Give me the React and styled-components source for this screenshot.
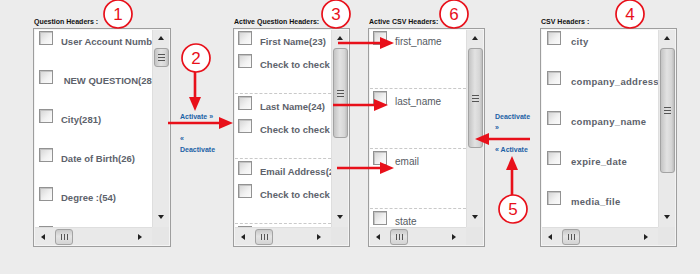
import React from "react";
import styled, { createGlobalStyle } from "styled-components";

const GlobalStyle = createGlobalStyle`
  html, body { margin: 0; padding: 0; background: #ececec; }
  body { font-family: "Liberation Sans", Arial, sans-serif; }
`;

const Page = styled.div`
  position: relative;
  width: 700px;
  height: 274px;
  box-sizing: border-box;
  padding: 17px 0 0 33px;
  display: flex;
  align-items: flex-start;
  background: #ececec;
`;

const Column = styled.div`
  display: flex;
  flex-direction: column;
  width: ${(p) => p.$w}px;
  margin-left: ${(p) => p.$ml || 0}px;
`;

const Label = styled.div`
  height: 10px;
  line-height: 10px;
  margin: 0 0 1px 1px;
  font-size: 7px;
  font-weight: bold;
  color: #111;
  white-space: nowrap;
`;

const ListBox = styled.div`
  box-sizing: border-box;
  width: ${(p) => p.$w}px;
  height: 219px;
  border: 1px solid #9e9e9e;
  padding: 1px;
  background: #f4f4f4;
  display: grid;
  grid-template-columns: 1fr 17px;
  grid-template-rows: 1fr 18px;
`;

const Content = styled.div`
  background: #fff;
  overflow: hidden;
  min-width: 0;
`;

const Row = styled.div`
  display: flex;
  align-items: flex-start;
  height: ${(p) => p.$h}px;
  padding-left: ${(p) => p.$pl}px;
  white-space: pre;
`;

const Check = styled.span`
  flex: none;
  box-sizing: border-box;
  width: 14px;
  height: 14px;
  margin-top: 1px;
  border: 1px solid #929292;
  background: linear-gradient(135deg, #d4d4d4 0%, #f2f2f2 60%, #fbfbfb 100%);
  box-shadow: inset 1px 1px 0 #c2c2c2;
`;

const ItemText = styled.span`
  margin: 6px 0 0 ${(p) => p.$gap}px;
  line-height: 12px;
  font-size: ${(p) => (p.$plain ? 10 : 9.5)}px;
  font-weight: ${(p) => (p.$plain ? "normal" : "bold")};
  color: ${(p) => (p.$plain ? "#555a62" : "#5d626b")};
  letter-spacing: ${(p) => (p.$wide ? 0.3 : 0)}px;
`;

const Group = styled.div`
  height: ${(p) => p.$h}px;
  border-bottom: 1px dashed #c9c9c9;
  margin-bottom: 1px;
`;

const VScroll = styled.div`
  display: flex;
  flex-direction: column;
  align-items: center;
  background: #e9e9e9;
  border-left: 1px solid #dedede;
`;

const ArrowBox = styled.div`
  flex: none;
  width: 16px;
  height: ${(p) => p.$h || 16}px;
  display: flex;
  align-items: center;
  justify-content: center;
`;

const Tri = styled.span`
  width: 0;
  height: 0;
  ${(p) =>
    p.$dir === "up"
      ? "border-left:3.5px solid transparent;border-right:3.5px solid transparent;border-bottom:4px solid #222;"
      : p.$dir === "down"
      ? "border-left:3.5px solid transparent;border-right:3.5px solid transparent;border-top:4px solid #222;"
      : p.$dir === "left"
      ? "border-top:3.5px solid transparent;border-bottom:3.5px solid transparent;border-right:4px solid #222;"
      : "border-top:3.5px solid transparent;border-bottom:3.5px solid transparent;border-left:4px solid #222;"}
`;

const VThumb = styled.div`
  flex: none;
  box-sizing: border-box;
  width: 15px;
  height: ${(p) => p.$h}px;
  margin-top: 2px;
  border: 1px solid #a3a3a3;
  border-radius: 3px;
  background: linear-gradient(to right, #c4c4c4 0%, #e2e2e2 45%, #d6d6d6 80%, #bdbdbd 100%);
  display: flex;
  flex-direction: column;
  align-items: center;
  justify-content: center;
  gap: 2px;
`;

const HGrip = styled.span`
  width: 7px;
  height: 1px;
  background: #555;
`;

const Spacer = styled.div`
  flex: 1;
`;

const HScroll = styled.div`
  display: flex;
  align-items: center;
  background: #e9e9e9;
  border-top: 1px solid #dedede;
`;

const HThumb = styled.div`
  flex: none;
  box-sizing: border-box;
  width: 18px;
  height: 16px;
  margin-left: 4px;
  border: 1px solid #a3a3a3;
  border-radius: 3px;
  background: linear-gradient(to bottom, #c8c8c8 0%, #e4e4e4 45%, #d4d4d4 100%);
  display: flex;
  align-items: center;
  justify-content: center;
  gap: 2px;
`;

const VGrip = styled.span`
  width: 1px;
  height: 6px;
  background: #555;
`;

const Corner = styled.div`
  background: #e6e6e6;
`;

const Controls = styled.div`
  box-sizing: border-box;
  width: ${(p) => p.$w}px;
  padding: 94px 0 0 ${(p) => p.$pl}px;
  display: flex;
  flex-direction: column;
`;

const CtrlLink = styled.a`
  display: block;
  width: 40px;
  margin-bottom: ${(p) => p.$mb || 0}px;
  font-size: 7px;
  line-height: 11px;
  font-weight: bold;
  color: #1b61a6;
  text-decoration: none;
`;

const Overlay = styled.svg`
  position: absolute;
  left: 0;
  top: 0;
  pointer-events: none;
`;

function ScrollList({ w, thumb, children }) {
  return (
    <ListBox $w={w}>
      <Content>{children}</Content>
      <VScroll>
        <ArrowBox>
          <Tri $dir="up" />
        </ArrowBox>
        <VThumb $h={thumb}>
          <HGrip />
          <HGrip />
          <HGrip />
        </VThumb>
        <Spacer />
        <ArrowBox $h={20}>
          <Tri $dir="down" />
        </ArrowBox>
      </VScroll>
      <HScroll>
        <ArrowBox>
          <Tri $dir="left" />
        </ArrowBox>
        <HThumb>
          <VGrip />
          <VGrip />
          <VGrip />
        </HThumb>
        <Spacer />
        <ArrowBox>
          <Tri $dir="right" />
        </ArrowBox>
        <ArrowBox $h={4} style={{ width: 4 }} />
      </HScroll>
      <Corner />
    </ListBox>
  );
}

function Item({ h, pl, gap, text, plain, wide }) {
  return (
    <Row $h={h} $pl={pl}>
      <Check />
      <ItemText $gap={gap} $plain={plain} $wide={wide}>
        {text}
      </ItemText>
    </Row>
  );
}

const questions = [
  "User Account Number(1)",
  " NEW QUESTION(282)",
  "City(281)",
  "Date of Birth(26)",
  "Degree :(54)",
  "Education(30)",
];

const activeQuestions = [
  ["First Name(23)", "Check to check all"],
  ["Last Name(24)", "Check to check all"],
  ["Email Address(25)", "Check to check all"],
  ["Phone(27)", "Check to check all"],
];

const activeCsv = ["first_name", "last_name", "email", "state"];

const csvHeaders = ["city", "company_address", "company_name", "expire_date", "media_file", "phone"];

const RED = "#e8101a";

function Circle({ cx, cy, n }) {
  return (
    <g>
      <circle cx={cx} cy={cy} r={14} fill="#fff" stroke={RED} strokeWidth={1.7} />
      <text
        x={cx}
        y={cy + 6}
        textAnchor="middle"
        fontFamily="Liberation Sans, Arial, sans-serif"
        fontSize="17"
        fill={RED}
      >
        {n}
      </text>
    </g>
  );
}

function Arrow({ x1, y1, x2, y2 }) {
  const dx = x2 - x1;
  const dy = y2 - y1;
  const len = Math.hypot(dx, dy);
  const ux = dx / len;
  const uy = dy / len;
  const hl = 14;
  const hw = 6;
  const bx = x2 - ux * hl;
  const by = y2 - uy * hl;
  const px = -uy;
  const py = ux;
  return (
    <g>
      <line x1={x1} y1={y1} x2={bx} y2={by} stroke={RED} strokeWidth={2.6} />
      <polygon
        points={`${x2},${y2} ${bx + px * hw},${by + py * hw} ${bx - px * hw},${by - py * hw}`}
        fill={RED}
      />
    </g>
  );
}

export default function App() {
  return (
    <>
      <GlobalStyle />
      <Page>
        <Column $w={138}>
          <Label>Question Headers :</Label>
          <ScrollList w={138} thumb={19}>
            {questions.map((q) => (
              <Item key={q} h={39} pl={4} gap={8} text={q} />
            ))}
          </ScrollList>
        </Column>

        <Controls $w={62} $pl={9}>
          <CtrlLink href="#" $mb={11}>Activate »</CtrlLink>
          <CtrlLink href="#">« Deactivate</CtrlLink>
        </Controls>

        <Column $w={117}>
          <Label>Active Question Headers:</Label>
          <ScrollList w={117} thumb={90}>
            {activeQuestions.map(([a, b]) => (
              <Group key={a} $h={63}>
                <Item h={23} pl={3} gap={8} text={a} />
                <Item h={23} pl={3} gap={8} text={b} />
              </Group>
            ))}
          </ScrollList>
        </Column>

        <Column $w={117} $ml={18}>
          <Label>Active CSV Headers:</Label>
          <ScrollList w={117} thumb={100}>
            {activeCsv.map((c) => (
              <Group key={c} $h={58}>
                <Item h={30} pl={3} gap={8} text={c} plain />
              </Group>
            ))}
          </ScrollList>
        </Column>

        <Controls $w={55} $pl={10}>
          <CtrlLink href="#" $mb={11}>Deactivate »</CtrlLink>
          <CtrlLink href="#">« Activate</CtrlLink>
        </Controls>

        <Column $w={137}>
          <Label>CSV Headers :</Label>
          <ScrollList w={137} thumb={125}>
            {csvHeaders.map((c) => (
              <Item key={c} h={40} pl={5} gap={10} text={c} wide />
            ))}
          </ScrollList>
        </Column>

        <Overlay width="700" height="274" viewBox="0 0 700 274">
          <Arrow x1={168} y1={123} x2={233} y2={123} />
          <Arrow x1={195} y1={72} x2={195} y2={111} />
          <Arrow x1={338} y1={43} x2={394} y2={43} />
          <Arrow x1={333} y1={105} x2={388} y2={105} />
          <Arrow x1={337} y1={168} x2={394} y2={168} />
          <Arrow x1={530} y1={139} x2={475} y2={139} />
          <Arrow x1={512} y1={195} x2={512} y2={156} />
          <Circle cx={118} cy={14} n="1" />
          <Circle cx={196} cy={58} n="2" />
          <Circle cx={336} cy={14} n="3" />
          <Circle cx={454} cy={14} n="6" />
          <Circle cx={630} cy={14} n="4" />
          <Circle cx={513} cy={209} n="5" />
        </Overlay>
      </Page>
    </>
  );
}
